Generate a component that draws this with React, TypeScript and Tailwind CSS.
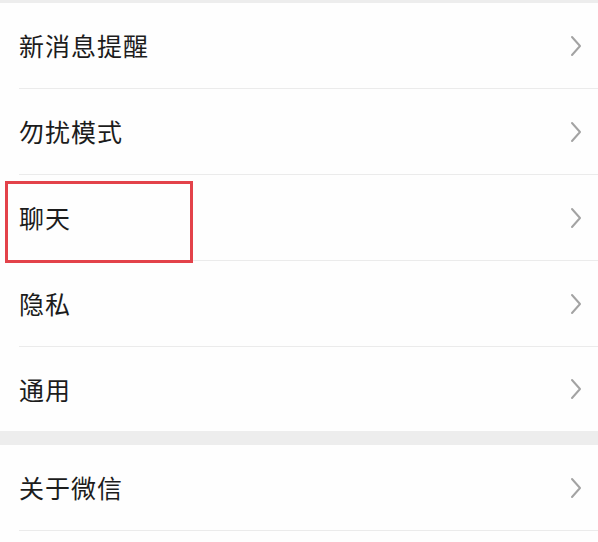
import React from 'react';

const Chevron = () => (
  <svg width="12" height="22" viewBox="0 0 12 22" fill="none" className="shrink-0">
    <path d="M2 2 L10 11 L2 20" stroke="#a3a3a3" strokeWidth="2" strokeLinecap="round" strokeLinejoin="round" />
  </svg>
);

const Row = ({ label, last, highlight }: { label: string; last?: boolean; highlight?: boolean }) => (
  <div className="relative pl-[19px]">
    <div
      className={`flex items-center justify-between pr-[16px] ${
        last ? 'h-[84px]' : 'h-[86px] border-b border-[#ebebeb]'
      }`}
    >
      <span className="text-[25px] leading-none text-[#1c1c1c] tracking-[1px]">{label}</span>
      <Chevron />
    </div>
    {highlight && (
      <div className="absolute left-[5px] top-[6px] h-[82px] w-[188px] border-[3px] border-[#e3424a]" />
    )}
  </div>
);

export default function App() {
  return (
    <div
      className="w-[598px] h-[542px] overflow-hidden bg-[#ededed]"
      style={{ fontFamily: '"Noto Sans CJK SC", "Noto Sans", sans-serif' }}
    >
      <div className="h-[3px]" />
      <div className="bg-[#fefefe]">
        <Row label="新消息提醒" />
        <Row label="勿扰模式" />
        <Row label="聊天" highlight />
        <Row label="隐私" />
        <Row label="通用" last />
      </div>
      <div className="h-[14px]" />
      <div className="bg-[#fefefe] h-[200px]">
        <Row label="关于微信" />
      </div>
    </div>
  );
}
